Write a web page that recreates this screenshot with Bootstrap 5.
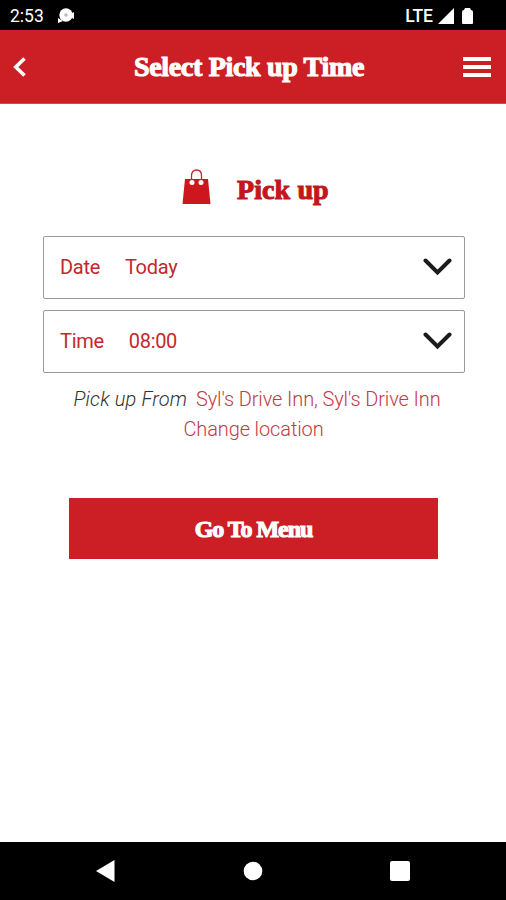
<!DOCTYPE html>
<html lang="en">
<head>
<meta charset="utf-8">
<meta name="viewport" content="width=device-width, initial-scale=1">
<title>Select Pick up Time</title>
<link href="https://cdn.jsdelivr.net/npm/bootstrap@5.3.0/dist/css/bootstrap.min.css" rel="stylesheet">
<style>
  :root { --brand: #cb1f25; }
  body { font-family: Roboto, "Liberation Sans", sans-serif; height: 900px; overflow: hidden; }
  svg { display: block; flex: none; }
  .status-bar { height: 30px; font-size: 17.5px; padding: 1px 33px 0 10px; }
  .status-bar span { padding-top: 2px; }
  .status-cam { margin-left: 14px; }
  .status-net { margin-right: 5px; }
  .app-bar { height: 74px; background: var(--brand); padding: 0 15px 0 13px; border-bottom: 1px solid #d9474c; }
  .display-face { font-family: "Liberation Serif", serif; font-weight: 700; -webkit-text-stroke: 1.1px currentColor; line-height: 1; white-space: nowrap; }
  .title-text { font-size: 28px; letter-spacing: -.32px; padding-right: 6px; }
  .mode-row { height: 132px; padding: 40px 0 0 182px; gap: 26px; }
  .bag { margin-bottom: 6px; }
  .mode-text { font-size: 28px; color: #c4161c; letter-spacing: .1px; }
  .picker { width: 422px; height: 63px; margin-left: 43px; border: 1.5px solid #999; border-radius: 2px; padding: 0 12px 2px 16px; font-size: 20px; letter-spacing: -.3px; color: #c3272f; }
  .picker-time { margin-top: 11px; }
  .picker-label { margin-right: 25px; }
  .pickup-from { padding: 11px 0 0 8px; font-size: 20px; line-height: 30px; font-weight: 300; letter-spacing: -.12px; color: #c13a46; }
  .pickup-from em { color: #333; margin-right: 4px; letter-spacing: .15px; }
  .change-link { padding-right: 7px; }
  .go-btn { width: 369px; height: 61px; margin: 54px 0 0 69px; background: var(--brand) !important; border-radius: 0; font-size: 24px; letter-spacing: -1.05px; }
  .nav-keys { height: 58px; padding: 0 96px; }
</style>
<script src="https://cdn.jsdelivr.net/npm/bootstrap@5.3.0/dist/js/bootstrap.bundle.min.js"></script>
</head>
<body class="d-flex flex-column bg-white">
  <div class="status-bar bg-black text-white d-flex align-items-center">
    <span>2:53</span>
    <svg class="status-cam" width="17" height="16" viewBox="0 0 17 16" fill="#fff"><circle cx="8" cy="7" r="6.7"/><path d="M0 15V10l5 3zM12 6l4-2v7l-4-2z"/><circle cx="8" cy="7" r="1.8" fill="#bbb"/></svg>
    <span class="status-net ms-auto fw-medium">LTE</span>
    <svg class="me-2" width="16" height="16"><path d="M0 16L16 0V16z" fill="#fff"/></svg>
    <svg width="11" height="16"><path d="M3 0h5l1 2q2 0 2 2v11q0 1-1 1H1q-1 0-1-1V4q0-2 2-2z" fill="#fff"/></svg>
  </div>

  <header class="app-bar text-white d-flex align-items-center justify-content-between">
    <svg width="28" height="20" fill="none" stroke="#fff" stroke-width="3.6"><path d="M11.5 1.5L2.8 10l8.7 8.5"/></svg>
    <h1 class="display-face title-text mb-0">Select Pick up Time</h1>
    <svg width="28" height="20" fill="#fff"><path d="M0 0h28v4H0zM0 8h28v4H0zM0 16h28v4H0z"/></svg>
  </header>

  <main class="flex-grow-1">
    <div class="mode-row d-flex align-items-center">
      <svg class="bag" width="29" height="36" viewBox="0 0 29 36"><path d="M3 10h23l2.5 25H.5z" fill="#cb171d"/><path d="M9.5 13V6.5C9.5 3 11.5 1 14.5 1s5 2 5 5.500V13" fill="none" stroke="#c4252b" stroke-width="1.3"/><circle cx="10" cy="13.500" r="2.500" fill="#fff"/><circle cx="19" cy="13.500" r="2.500" fill="#fff"/></svg>
      <h2 class="display-face mode-text mb-0">Pick up</h2>
    </div>

    <div class="picker d-flex align-items-center">
      <span class="picker-label">Date</span><span>Today</span>
      <svg class="ms-auto" width="29" height="18" fill="none" stroke="#1b1b1b" stroke-width="4" stroke-linecap="round"><path d="M2.500 2.500L14.500 14.500 26.500 2.500"/></svg>
    </div>
    <div class="picker picker-time d-flex align-items-center">
      <span class="picker-label">Time</span><span>08:00</span>
      <svg class="ms-auto" width="29" height="18" fill="none" stroke="#1b1b1b" stroke-width="4" stroke-linecap="round"><path d="M2.500 2.500L14.500 14.500 26.500 2.500"/></svg>
    </div>

    <div class="pickup-from text-center">
      <div><em>Pick up From</em> <span>Syl's Drive Inn, Syl's Drive Inn</span></div>
      <div class="change-link">Change location</div>
    </div>

    <button class="go-btn btn text-white d-flex align-items-center justify-content-center display-face" type="button">Go To Menu</button>
  </main>

  <footer class="nav-keys bg-black d-flex align-items-center justify-content-between">
    <svg width="19" height="22"><path d="M0 11L18.500 0V22z" fill="#fff"/></svg>
    <svg width="20" height="20"><circle cx="10" cy="10" r="9.300" fill="#fff"/></svg>
    <svg width="20" height="20"><rect width="20" height="20" rx="2" fill="#fff"/></svg>
  </footer>
</body>
</html>
